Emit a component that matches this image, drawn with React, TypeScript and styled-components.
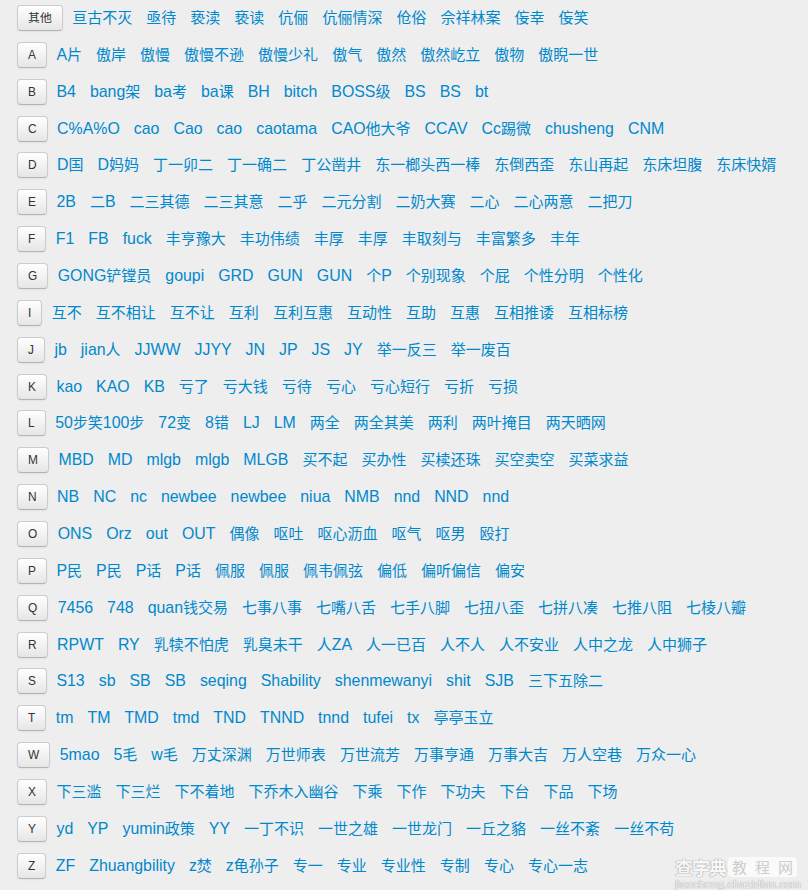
import React from "react";
import styled, { createGlobalStyle } from "styled-components";

const GlobalStyle = createGlobalStyle`
  html, body {
    margin: 0;
    padding: 0;
    background: #eeeeee;
  }
  body {
    font-family: "Liberation Sans", "Noto Sans CJK SC", sans-serif;
  }
`;

const Page = styled.div`
  position: relative;
  box-sizing: border-box;
  width: 808px;
  height: 890px;
  overflow: hidden;
  padding: 5px 0 0 17px;
  background: #eeeeee;
`;

const Row = styled.div`
  display: flex;
  align-items: flex-start;
  height: 36.87px;
  white-space: nowrap;
`;

const LetterButton = styled.button`
  box-sizing: border-box;
  height: 26px;
  padding: 0 10px;
  margin: 0 9.5px 0 0;
  font-family: "Liberation Sans", "Noto Sans CJK SC", sans-serif;
  font-size: 11.9px;
  line-height: 24px;
  color: #333333;
  background-color: #f5f5f5;
  background-image: linear-gradient(to bottom, #ffffff, #e6e6e6);
  border: 1px solid #cccccc;
  border-bottom-color: #b3b3b3;
  border-radius: 4px;
  box-shadow: inset 0 1px 0 rgba(255, 255, 255, 0.2), 0 1px 2px rgba(0, 0, 0, 0.05);
  cursor: pointer;
  flex: none;
`;

const Words = styled.div`
  display: flex;
  align-items: center;
  height: 26px;
  gap: 14px;
`;

const Word = styled.a`
  font-family: "Liberation Sans", "Noto Sans CJK SC", sans-serif;
  font-size: 15px;
  line-height: 20px;
  color: #0088cc;
  text-decoration: none;
`;

const Latin = styled.span`
  font-size: 15.9px;
`;

const Watermark = styled.div`
  position: absolute;
  right: 11px;
  bottom: 0;
  width: 122px;
  height: 34px;
  display: flex;
  flex-direction: column;
  align-items: flex-start;
  pointer-events: none;
  white-space: nowrap;
`;

const MarkTop = styled.div`
  display: flex;
  align-items: center;
  gap: 2px;
  height: 22px;
`;

const MarkBrand = styled.span`
  font-family: "Noto Sans CJK SC", sans-serif;
  font-size: 18px;
  font-weight: 700;
  line-height: 22px;
  letter-spacing: -1px;
  color: #f7f7f7;
  text-shadow: 0 0 1px #a8a8a8, 0 0 1px #a8a8a8, 0 0 1px #a8a8a8;
`;

const MarkBox = styled.span`
  display: flex;
  align-items: center;
  justify-content: space-around;
  width: 69px;
  height: 20px;
  background: #fafafa;
  border-radius: 4px;
  font-family: "Noto Sans CJK SC", sans-serif;
  font-size: 15px;
  line-height: 20px;
  color: #cccccc;
`;

const MarkUrl = styled.span`
  font-family: "Liberation Sans", sans-serif;
  font-size: 11.5px;
  line-height: 12px;
  color: #f8f8f8;
  text-shadow: 0 0 1px #a0a0a0, 0 0 1px #a0a0a0;
`;

type Group = { key: string; words: string[] };

const groups: Group[] = [
  { key: "其他", words: ["亘古不灭", "亟待", "亵渎", "亵读", "伉俪", "伉俪情深", "伧俗", "佘祥林案", "侫幸", "侫笑"] },
  { key: "A", words: ["A片", "傲岸", "傲慢", "傲慢不逊", "傲慢少礼", "傲气", "傲然", "傲然屹立", "傲物", "傲睨一世"] },
  { key: "B", words: ["B4", "bang架", "ba考", "ba课", "BH", "bitch", "BOSS级", "BS", "BS", "bt"] },
  { key: "C", words: ["C%A%O", "cao", "Cao", "cao", "caotama", "CAO他大爷", "CCAV", "Cc踢微", "chusheng", "CNM"] },
  { key: "D", words: ["D国", "D妈妈", "丁一卯二", "丁一确二", "丁公凿井", "东一榔头西一棒", "东倒西歪", "东山再起", "东床坦腹", "东床快婿"] },
  { key: "E", words: ["2B", "二B", "二三其德", "二三其意", "二乎", "二元分割", "二奶大赛", "二心", "二心两意", "二把刀"] },
  { key: "F", words: ["F1", "FB", "fuck", "丰亨豫大", "丰功伟绩", "丰厚", "丰厚", "丰取刻与", "丰富繁多", "丰年"] },
  { key: "G", words: ["GONG铲镗员", "goupi", "GRD", "GUN", "GUN", "个P", "个别现象", "个屁", "个性分明", "个性化"] },
  { key: "I", words: ["互不", "互不相让", "互不让", "互利", "互利互惠", "互动性", "互助", "互惠", "互相推诿", "互相标榜"] },
  { key: "J", words: ["jb", "jian人", "JJWW", "JJYY", "JN", "JP", "JS", "JY", "举一反三", "举一废百"] },
  { key: "K", words: ["kao", "KAO", "KB", "亏了", "亏大钱", "亏待", "亏心", "亏心短行", "亏折", "亏损"] },
  { key: "L", words: ["50步笑100步", "72变", "8错", "LJ", "LM", "两全", "两全其美", "两利", "两叶掩目", "两天晒网"] },
  { key: "M", words: ["MBD", "MD", "mlgb", "mlgb", "MLGB", "买不起", "买办性", "买椟还珠", "买空卖空", "买菜求益"] },
  { key: "N", words: ["NB", "NC", "nc", "newbee", "newbee", "niua", "NMB", "nnd", "NND", "nnd"] },
  { key: "O", words: ["ONS", "Orz", "out", "OUT", "偶像", "呕吐", "呕心沥血", "呕气", "呕男", "殴打"] },
  { key: "P", words: ["P民", "P民", "P话", "P话", "佩服", "佩服", "佩韦佩弦", "偏低", "偏听偏信", "偏安"] },
  { key: "Q", words: ["7456", "748", "quan钱交易", "七事八事", "七嘴八舌", "七手八脚", "七扭八歪", "七拼八凑", "七推八阻", "七棱八瓣"] },
  { key: "R", words: ["RPWT", "RY", "乳犊不怕虎", "乳臭未干", "人ZA", "人一已百", "人不人", "人不安业", "人中之龙", "人中狮子"] },
  { key: "S", words: ["S13", "sb", "SB", "SB", "seqing", "Shability", "shenmewanyi", "shit", "SJB", "三下五除二"] },
  { key: "T", words: ["tm", "TM", "TMD", "tmd", "TND", "TNND", "tnnd", "tufei", "tx", "亭亭玉立"] },
  { key: "W", words: ["5mao", "5毛", "w毛", "万丈深渊", "万世师表", "万世流芳", "万事亨通", "万事大吉", "万人空巷", "万众一心"] },
  { key: "X", words: ["下三滥", "下三烂", "下不着地", "下乔木入幽谷", "下乘", "下作", "下功夫", "下台", "下品", "下场"] },
  { key: "Y", words: ["yd", "YP", "yumin政策", "YY", "一丁不识", "一世之雄", "一世龙门", "一丘之貉", "一丝不紊", "一丝不苟"] },
  { key: "Z", words: ["ZF", "Zhuangbility", "z焚", "z龟孙子", "专一", "专业", "专业性", "专制", "专心", "专心一志"] },
];

// split a word into runs of ASCII and non-ASCII characters
function splitRuns(word: string): { text: string; latin: boolean }[] {
  const runs: { text: string; latin: boolean }[] = [];
  for (const ch of word) {
    const latin = ch.charCodeAt(0) < 128;
    const last = runs[runs.length - 1];
    if (last && last.latin === latin) last.text += ch;
    else runs.push({ text: ch, latin });
  }
  return runs;
}

export default function App() {
  return (
    <>
      <GlobalStyle />
      <Page>
        {groups.map((g) => (
          <Row key={g.key}>
            <LetterButton type="button">{g.key}</LetterButton>
            <Words>
              {g.words.map((w, i) => (
                <Word key={i} href="#">
                  {splitRuns(w).map((r, j) =>
                    r.latin ? <Latin key={j}>{r.text}</Latin> : <React.Fragment key={j}>{r.text}</React.Fragment>
                  )}
                </Word>
              ))}
            </Words>
          </Row>
        ))}
        <Watermark>
          <MarkTop>
            <MarkBrand>查字典</MarkBrand>
            <MarkBox>
              <span>教</span>
              <span>程</span>
              <span>网</span>
            </MarkBox>
          </MarkTop>
          <MarkUrl>jiaocheng.chazidian.com</MarkUrl>
        </Watermark>
      </Page>
    </>
  );
}
